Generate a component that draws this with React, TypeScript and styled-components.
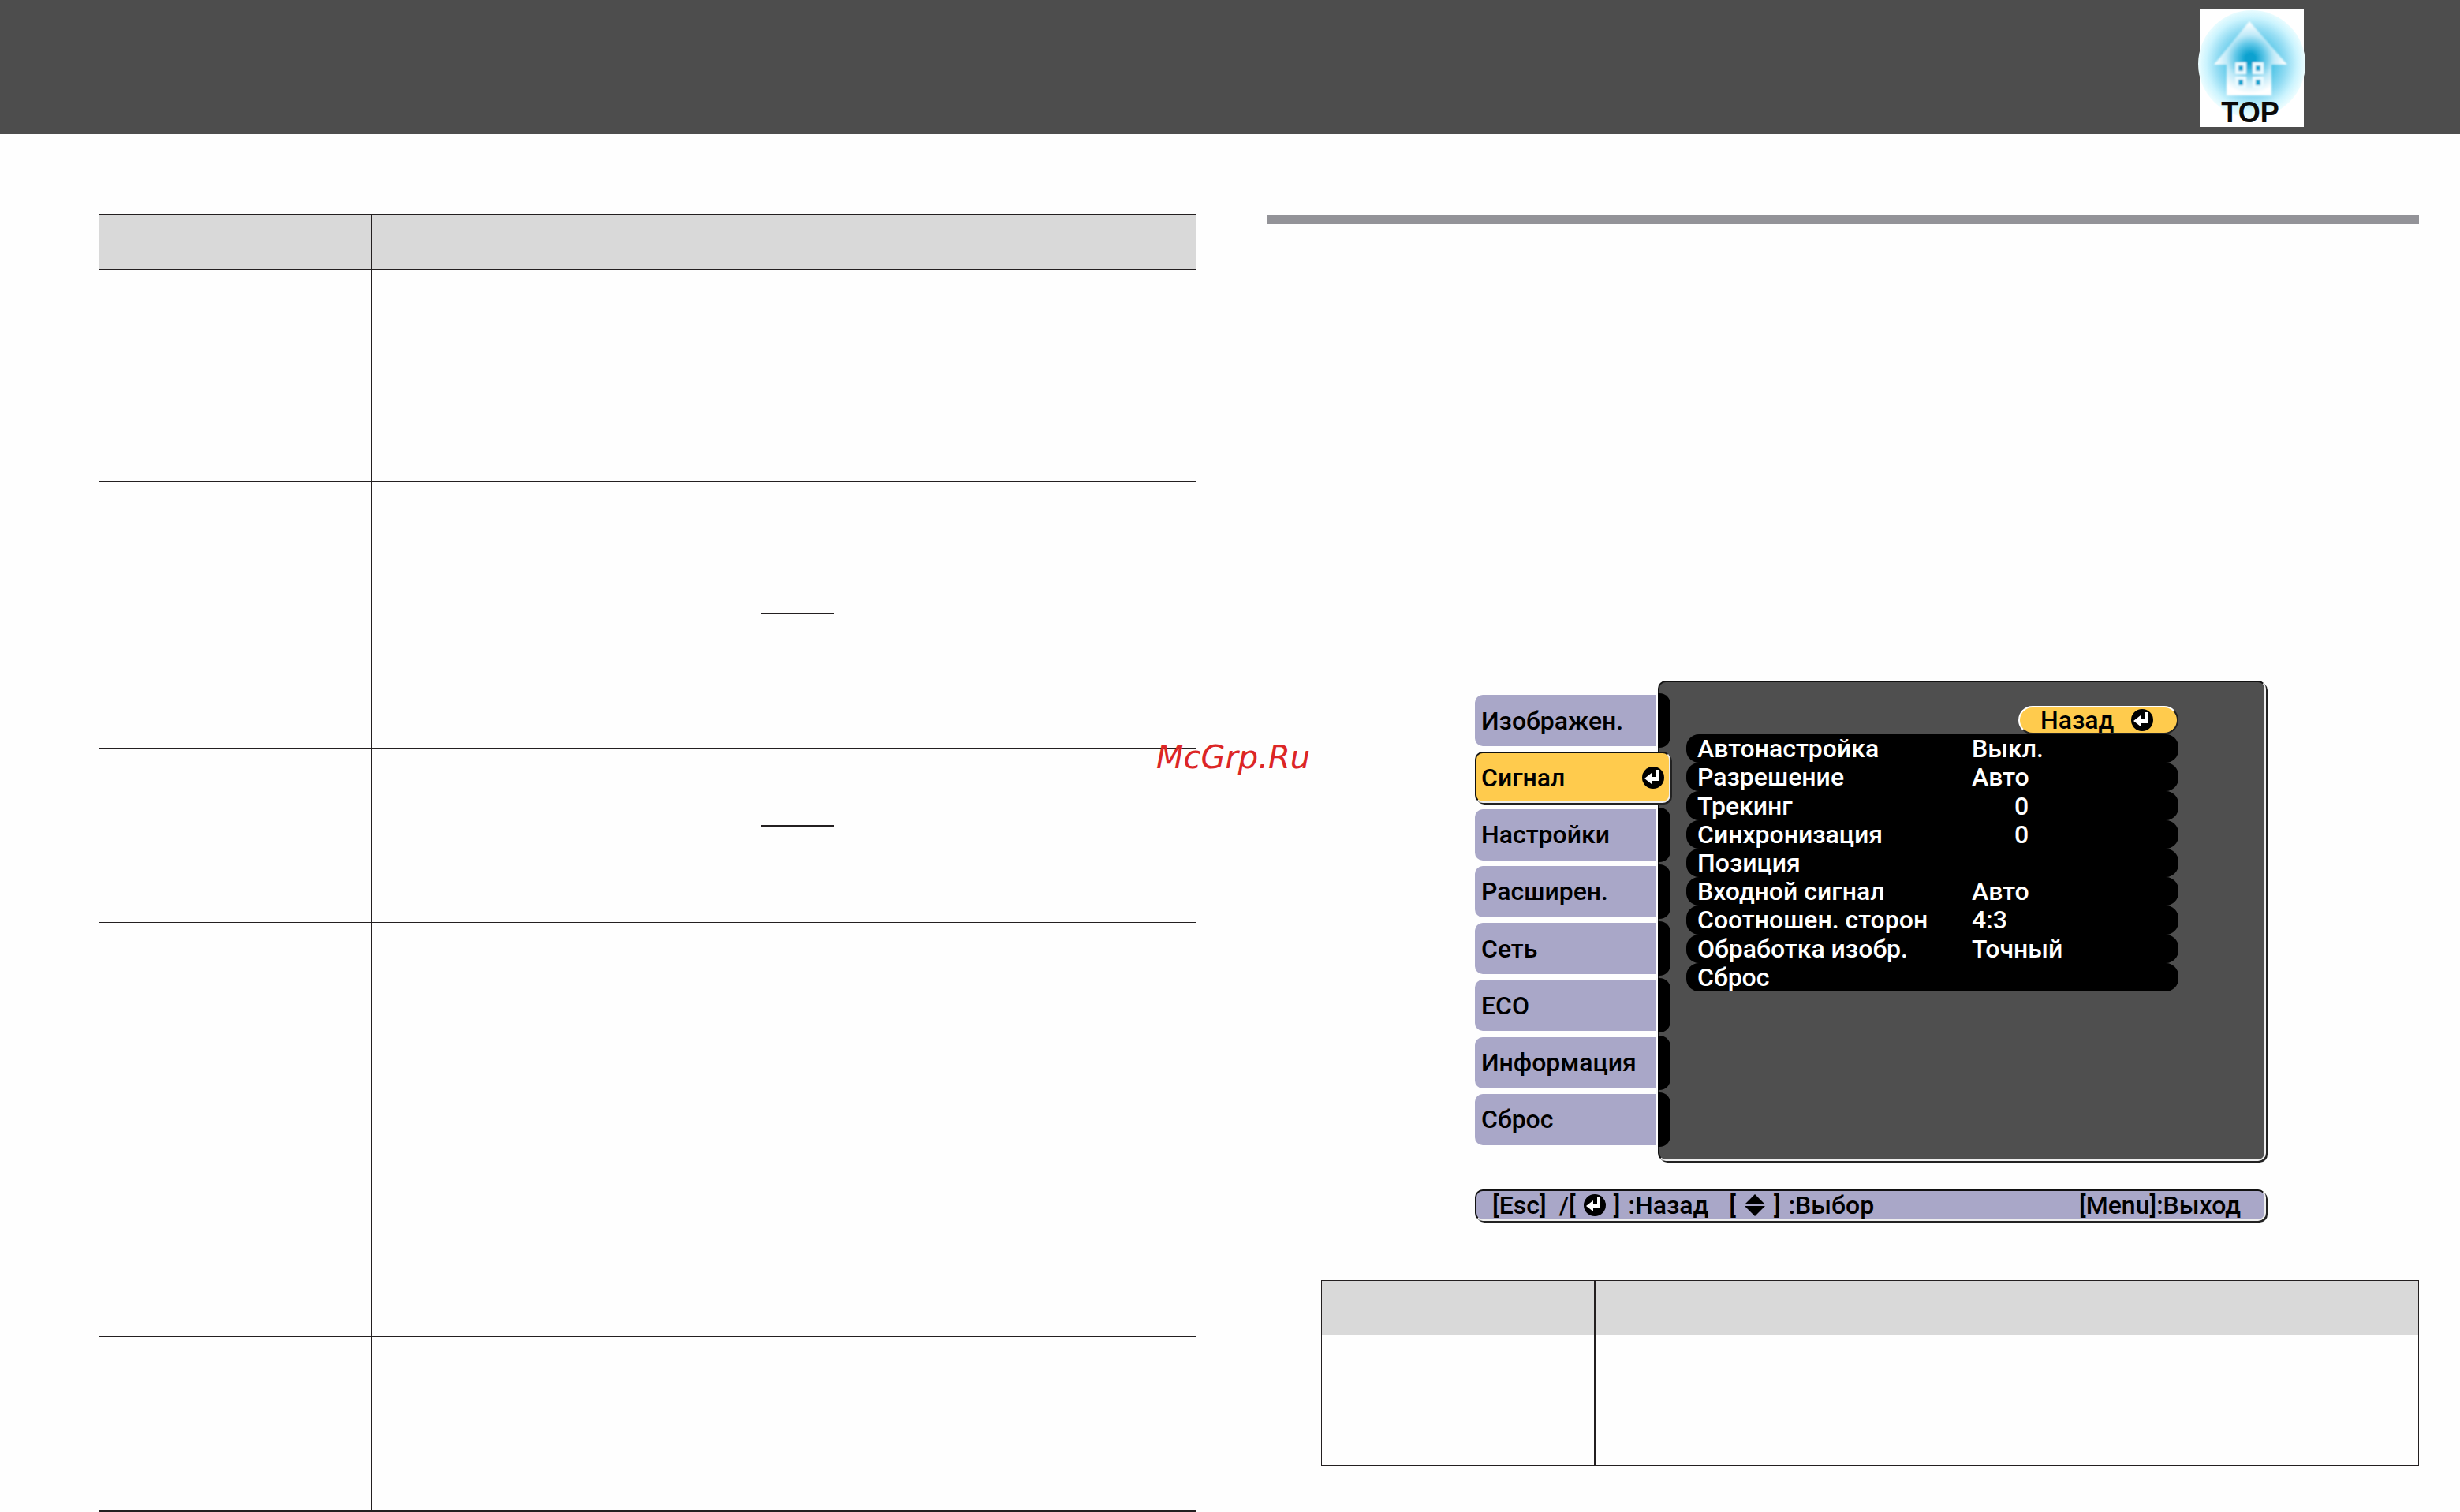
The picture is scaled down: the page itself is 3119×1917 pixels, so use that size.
import React from 'react';
import styled, { createGlobalStyle, css } from 'styled-components';

const GlobalStyle = createGlobalStyle`
  *, *::before, *::after { box-sizing: border-box; }
  body { margin: 0; background: #fefefe; }
  button { margin: 0; padding: 0; border: 0; background: none; font: inherit; color: inherit; text-align: left; }
`;

const Page = styled.div`
  position: relative;
  font-family: Roboto, "Noto Sans", sans-serif;
`;

const Header = styled.header`
  display: flex;
  justify-content: flex-end;
  height: 170px;
  padding: 12px 198px 0 0;
  background: #4d4d4d;
`;

const HomeLink = styled.a`
  position: relative;
  display: flex;
  flex-direction: column;
  justify-content: flex-end;
  align-items: center;
  width: 132px;
  height: 149px;
  padding-right: 4px;
  background: #fff;
  color: #0a0a0a;
  font: bold 36px/36px "Liberation Sans", Arial, sans-serif;
  text-decoration: none;
`;

const HomeArt = styled.svg`
  position: absolute;
  left: -2px;
  top: 0;
  width: 136px;
  height: 149px;
`;

const HomeLabel = styled.span`
  position: relative;
`;

const Main = styled.main`
  display: grid;
  grid-template-columns: 1392fr 1460fr;
  column-gap: 90px;
  align-items: start;
  padding: 101px 52px 0 125px;
`;

const Table = styled.table<{ $top: number }>`
  width: 100%;
  table-layout: fixed;
  border-collapse: separate;
  border-spacing: 0;
  border-top: ${(p) => p.$top}px solid #231f20;
  border-right: 1px solid #231f20;
`;

const cell = css`
  padding: 0 16px;
  border-left: 1px solid #231f20;
  border-bottom: 1px solid #231f20;
  vertical-align: top;
`;

const HeadCell = styled.th<{ $line?: number }>`
  ${cell}
  height: 69px;
  background: #d9d9d9;
  border-left-width: ${(p) => p.$line ?? 1}px;
  &:first-child { width: 346px; }
`;

const Cell = styled.td<{ $line?: number }>`
  ${cell}
  border-left-width: ${(p) => p.$line ?? 1}px;
  tr:last-child > & { border-bottom-width: 2px; }
`;

const Row = styled.tr<{ $height: number }>`
  height: ${(p) => p.$height}px;
`;

const Underline = styled.span`
  display: block;
  width: 92px;
  height: 2px;
  margin: 97px 0 0 477px;
  background: #231f20;
`;

const Section = styled.section`
  padding-top: 1px;
`;

const Rule = styled.hr`
  height: 12px;
  margin: 0;
  border: 0;
  background: #939398;
`;

const Prose = styled.div`
  min-height: 579px;
`;

const TableWrap = styled.div`
  margin-top: 75px;
  padding-left: 68px;
`;

/* Raised edge shared by the panel, the active tab and the key guide */
const raised = css`
  border: 2px solid;
  border-color: #111 #eee #eee #111;
  border-radius: 10px;
  box-shadow: 2px 2px 0 #222;
`;

const Osd = styled.figure`
  width: 1003px;
  max-width: calc(100% - 194px);
  margin: 0 0 0 263px;
  font-size: 32px;
  font-weight: 500;
  line-height: 36px;
  color: #000;
`;

const OsdBody = styled.div`
  display: flex;
  height: 609px;
`;

const Tabs = styled.nav`
  position: relative;
  z-index: 1;
  display: flex;
  flex-direction: column;
  justify-content: space-between;
  width: 232px;
  padding: 18px 0 20px;
`;

const Tab = styled.button<{ $active?: boolean }>`
  position: relative;
  display: flex;
  align-items: center;
  justify-content: space-between;
  width: 230px;
  height: 65px;
  padding: 0 8px;
  background: #a9a7c8;
  border-radius: 10px 0 0 10px;
  ${(p) =>
    p.$active
      ? css`
          ${raised}
          width: 248px;
          padding: 0 6px;
          background: #ffcb4d;
        `
      : css`
          &::after {
            content: "";
            position: absolute;
            left: 232px;
            top: -2px;
            width: 16px;
            height: 69px;
            border-radius: 0 14px 14px 0;
            background: #000;
          }
        `}
`;

const Panel = styled.div`
  ${raised}
  flex: 1;
  display: flex;
  flex-direction: column;
  padding: 30px 109px 0 34px;
  background: #4f4f4f;
`;

const Back = styled.button`
  display: flex;
  align-items: center;
  align-self: flex-end;
  gap: 22px;
  width: 203px;
  height: 36px;
  padding-left: 26px;
  border: 2px solid;
  border-color: #fff #222 #222 #fff;
  border-radius: 18px;
  background: #ffcb4d;
`;

const Items = styled.div`
  display: grid;
  grid-auto-rows: 1fr;
  height: 326px;
`;

const Item = styled.button`
  display: grid;
  grid-template-columns: 348px 1fr;
  align-items: center;
  padding-left: 14px;
  border-radius: 16px;
  background: #000;
  color: #fff;
`;

const Value = styled.span<{ $numeric?: boolean }>`
  padding-left: ${(p) => (p.$numeric ? 54 : 0)}px;
`;

const Guide = styled.figcaption`
  ${raised}
  display: flex;
  align-items: center;
  height: 40px;
  margin-top: 36px;
  padding: 0 30px 0 20px;
  background: #a9a7c8;
`;

const Keys = styled.span<{ $gap: number }>`
  display: flex;
  align-items: center;
  gap: 10px;
  margin-left: ${(p) => p.$gap}px;
`;

const GuideText = styled.span`
  margin-left: 10px;
`;

const GuideEnd = styled.span`
  margin-left: auto;
`;

const Icon = styled.svg`
  flex: none;
  display: block;
  width: 28px;
  height: 28px;
`;

const Watermark = styled.div`
  position: absolute;
  left: 47%;
  top: 937px;
  font: italic 40px/46px "DejaVu Sans", Verdana, sans-serif;
  color: #dc2626;
`;

const EnterIcon = () => (
  <Icon viewBox="0 0 28 28" aria-hidden="true">
    <circle cx="14" cy="14" r="14" fill="#000" />
    <path d="M17 4h4v14h-9v4L3 15l9-7v5h5z" fill="#fff" />
  </Icon>
);

const UpDownIcon = () => (
  <Icon viewBox="0 0 28 28" aria-hidden="true">
    <path d="M14 0L27 13H1zM1 15h26L14 28z" fill="#000" />
  </Icon>
);

const Home = () => (
  <HomeLink href="#top">
    <HomeArt viewBox="0 0 136 149" aria-hidden="true">
      <defs>
        <radialGradient id="halo" cx="68" cy="68" r="68" gradientUnits="userSpaceOnUse">
          <stop offset="0" stopColor="#0aa3d0" />
          <stop offset="0.4" stopColor="#55c6e7" />
          <stop offset="0.65" stopColor="#93dcf3" />
          <stop offset="0.85" stopColor="#ccf4fe" />
          <stop offset="1" stopColor="#ecfdff" />
        </radialGradient>
        <radialGradient id="house" cx="66" cy="62" r="50" gradientUnits="userSpaceOnUse">
          <stop offset="0.12" stopColor="#0ba1cf" />
          <stop offset="0.38" stopColor="#62c8e8" />
          <stop offset="0.6" stopColor="#c0eaf8" />
          <stop offset="0.9" stopColor="#fff" />
        </radialGradient>
        <filter id="soft" x="-10%" y="-10%" width="120%" height="120%">
          <feGaussianBlur stdDeviation="1" />
        </filter>
      </defs>
      <circle cx="68" cy="69" r="68" fill="url(#halo)" />
      <g filter="url(#soft)">
        <path d="M65 15L113 70H93v39H36V70H20z" fill="url(#house)" />
        <g fill="#1ba5d0" stroke="#e9faff" strokeWidth="4">
          <rect x="49" y="69" width="10" height="11" />
          <rect x="71" y="69" width="10" height="11" />
          <rect x="49" y="87" width="10" height="11" />
          <rect x="71" y="87" width="10" height="11" />
        </g>
      </g>
    </HomeArt>
    <HomeLabel>TOP</HomeLabel>
  </HomeLink>
);

const leftRows = [
  { height: 269 },
  { height: 69 },
  { height: 269, link: true },
  { height: 221, link: true },
  { height: 525 },
  { height: 222 },
];

const tabs = ['Изображен.', 'Сигнал', 'Настройки', 'Расширен.', 'Сеть', 'ECO', 'Информация', 'Сброс'];

const items: { label: string; value?: string; numeric?: boolean }[] = [
  { label: 'Автонастройка', value: 'Выкл.' },
  { label: 'Разрешение', value: 'Авто' },
  { label: 'Трекинг', value: '0', numeric: true },
  { label: 'Синхронизация', value: '0', numeric: true },
  { label: 'Позиция' },
  { label: 'Входной сигнал', value: 'Авто' },
  { label: 'Соотношен. сторон', value: '4:3' },
  { label: 'Обработка изобр.', value: 'Точный' },
  { label: 'Сброс' },
];

export default function App() {
  return (
    <Page id="top">
      <GlobalStyle />
      <Header>
        <Home />
      </Header>
      <Main>
        <Table $top={2}>
          <thead>
            <tr>
              <HeadCell />
              <HeadCell />
            </tr>
          </thead>
          <tbody>
            {leftRows.map((row, i) => (
              <Row key={i} $height={row.height}>
                <Cell />
                <Cell>{row.link && <Underline />}</Cell>
              </Row>
            ))}
          </tbody>
        </Table>
        <Section>
          <Rule />
          <Prose />
          <Osd>
            <OsdBody>
              <Tabs>
                {tabs.map((name) => (
                  <Tab key={name} type="button" $active={name === 'Сигнал'}>
                    {name}
                    {name === 'Сигнал' && <EnterIcon />}
                  </Tab>
                ))}
              </Tabs>
              <Panel>
                <Back type="button">
                  Назад
                  <EnterIcon />
                </Back>
                <Items>
                  {items.map((item) => (
                    <Item key={item.label} type="button">
                      <span>{item.label}</span>
                      {item.value && <Value $numeric={item.numeric}>{item.value}</Value>}
                    </Item>
                  ))}
                </Items>
              </Panel>
            </OsdBody>
            <Guide>
              <span>[Esc]</span>
              <Keys $gap={16}>
                /[
                <EnterIcon />]
              </Keys>
              <GuideText>:Назад</GuideText>
              <Keys $gap={26}>
                [
                <UpDownIcon />]
              </Keys>
              <GuideText>:Выбор</GuideText>
              <GuideEnd>[Menu]:Выход</GuideEnd>
            </Guide>
          </Osd>
          <TableWrap>
            <Table $top={1}>
              <thead>
                <tr>
                  <HeadCell />
                  <HeadCell $line={2} />
                </tr>
              </thead>
              <tbody>
                <Row $height={166}>
                  <Cell />
                  <Cell $line={2} />
                </Row>
              </tbody>
            </Table>
          </TableWrap>
        </Section>
      </Main>
      <Watermark>McGrp.Ru</Watermark>
    </Page>
  );
}
